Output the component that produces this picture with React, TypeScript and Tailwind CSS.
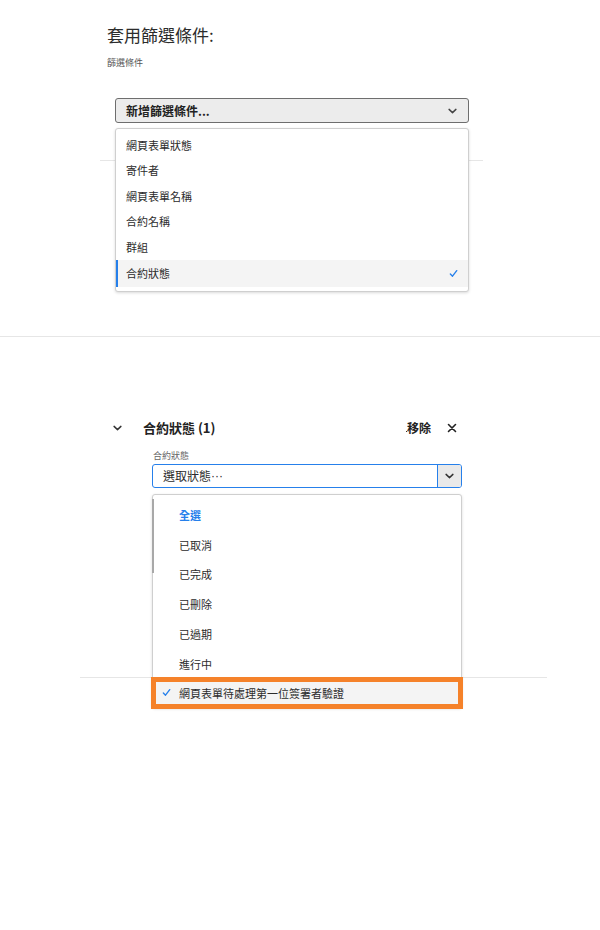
import React from "react";

const FONT = { fontFamily: '"Noto Sans CJK TC", "Noto Sans", sans-serif' };

function Chevron({ className = "" }: { className?: string }) {
  return (
    <svg viewBox="0 0 10 6" className={className} fill="none">
      <path d="M1.2 1.2 5 4.8 8.8 1.2" stroke="currentColor" strokeWidth="1.6" strokeLinecap="round" strokeLinejoin="round" />
    </svg>
  );
}

function Check({ className = "" }: { className?: string }) {
  return (
    <svg viewBox="0 0 10 10" className={className} fill="none">
      <path d="M1.5 5.6 3.9 8 8.6 1.8" stroke="currentColor" strokeWidth="1.5" strokeLinecap="round" strokeLinejoin="round" />
    </svg>
  );
}

const filterItems = ["網頁表單狀態", "寄件者", "網頁表單名稱", "合約名稱", "群組", "合約狀態"];
const statusItems = ["已取消", "已完成", "已刪除", "已過期", "進行中"];

export default function App() {
  return (
    <div className="relative h-[930px] w-[600px] overflow-hidden bg-white text-[#2c2c2c]" style={FONT}>
      {/* apply filters */}
      <div className="pl-[107px] pt-[24px]">
        <h2 className="text-[17px] leading-[22px] text-[#2c2c2c]">套用篩選條件:</h2>
        <p className="mt-[11px] text-[9px] leading-[12px] text-[#555]">篩選條件</p>

        <div className="relative ml-[8px] mt-[29px] w-[354px]">
          <button className="flex h-[25px] w-full items-center justify-between rounded-[3px] border border-[#6e6e6e] bg-[#ececec] pl-[10px] pr-[11px] text-[12px] font-bold text-[#222]">
            <span>新增篩選條件...</span>
            <Chevron className="h-[6px] w-[9px] text-[#444]" />
          </button>
          <ul className="absolute left-0 right-0 top-[30px] z-10 rounded-[3px] border border-[#cfcfcf] bg-white pb-[4px] pt-[3px] shadow-[0_1px_3px_rgba(0,0,0,0.15)]">
            {filterItems.map((item, i) => {
              const selected = i === filterItems.length - 1;
              return (
                <li
                  key={item}
                  className={
                    selected
                      ? "flex h-[27px] items-center justify-between border-l-2 border-[#2680eb] bg-[#f4f4f4] pl-[8px] pr-[10px] text-[11px] text-[#2c2c2c]"
                      : "flex h-[25.6px] items-center pl-[10px] text-[11px] text-[#2c2c2c]"
                  }
                >
                  <span>{item}</span>
                  {selected && <Check className="h-[9px] w-[9px] text-[#2680eb]" />}
                </li>
              );
            })}
          </ul>
        </div>
      </div>
      <div className="ml-[100px] mt-[37px] w-[383px] border-t border-[#e6e6e6]" />

      <div className="mt-[175px] border-t border-[#e6e6e6]" />

      {/* contract status filter */}
      <div className="relative mt-[80px] pl-[113px]">
        <div className="flex h-[22px] w-[344px] items-center">
          <Chevron className="h-[6px] w-[9px] text-[#333]" />
          <span className="ml-[21px] text-[13px] font-bold text-[#222]">合約狀態 (1)</span>
          <span className="ml-auto text-[12px] font-bold text-[#222]">移除</span>
          <svg viewBox="0 0 10 10" className="ml-[16px] h-[10px] w-[10px] text-[#222]" fill="none">
            <path d="M1.5 1.5 8.5 8.5M8.5 1.5 1.5 8.5" stroke="currentColor" strokeWidth="1.6" strokeLinecap="round" />
          </svg>
        </div>
        <span className="absolute left-[406px] top-[14px] h-[1px] w-[1px] bg-[#333]" />

        <div className="ml-[39px] mt-[11px] w-[310px]">
          <p className="pl-[1px] text-[9px] leading-[12px] text-[#666]">合約狀態</p>
          <div className="relative mt-[2px]">
            <div className="flex h-[24px] w-full items-stretch overflow-hidden rounded-[3px] border border-[#2680eb] bg-white">
              <span className="flex flex-1 items-center pl-[10px] text-[12px] text-[#2c2c2c]">
                選取狀態
                <span style={{ fontFamily: '"Liberation Sans", sans-serif' }}>···</span>
              </span>
              <span className="flex w-[24px] items-center justify-center border-l border-[#2680eb] bg-[#e9e9e9]">
                <Chevron className="h-[6px] w-[9px] text-[#333]" />
              </span>
            </div>
            <ul className="absolute left-0 right-0 top-[30px] z-10 rounded-[3px] border border-[#cfcfcf] bg-white pt-[5px] shadow-[0_1px_3px_rgba(0,0,0,0.15)]">
              <span className="absolute left-[-1px] top-[4px] h-[74px] w-[2px] bg-[#a8a8a8]" />
              <li className="flex h-[30px] items-center pl-[26px] text-[11px] font-bold text-[#2680eb]">全選</li>
              {statusItems.map((item) => (
                <li key={item} className="flex h-[29.8px] items-center pl-[26px] text-[11px] text-[#2c2c2c]">
                  {item}
                </li>
              ))}
              <li className="flex h-[28px] items-center bg-[#f4f4f4] pl-[9px] text-[11px] text-[#2c2c2c] outline-[5px] outline-offset-[-3px] outline-[#f5822a] outline-solid">
                <Check className="h-[9px] w-[9px] text-[#2680eb]" />
                <span className="ml-[8px]">網頁表單待處理第一位簽署者驗證</span>
              </li>
            </ul>
          </div>
        </div>
        <div className="ml-[-33px] mt-[189px] w-[467px] border-t border-[#e6e6e6]" />
      </div>
    </div>
  );
}
